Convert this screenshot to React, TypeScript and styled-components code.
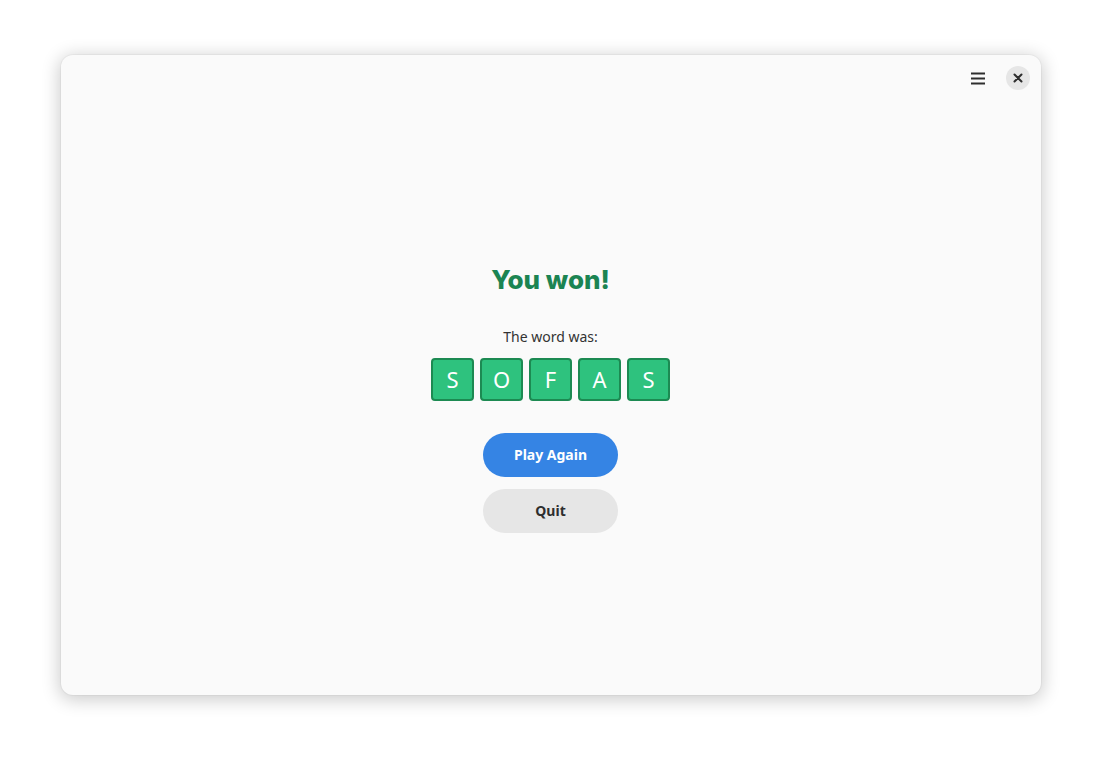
import React from "react";
import styled, { createGlobalStyle } from "styled-components";

const GlobalStyle = createGlobalStyle`
  html, body {
    margin: 0;
    padding: 0;
    background: #ffffff;
  }
  body {
    font-family: "Noto Sans", "Open Sans", sans-serif;
  }
`;

const Page = styled.div`
  width: 1102px;
  height: 762px;
  box-sizing: border-box;
  padding: 55px 61px 67px 61px;
  display: flex;
`;

const Window = styled.div`
  flex: 1;
  display: flex;
  flex-direction: column;
  background: #fafafa;
  border-radius: 12px;
  box-shadow: 0 0 0 1px rgba(0, 0, 0, 0.03), 0 3px 18px 2px rgba(0, 0, 0, 0.2);
  overflow: hidden;
`;

const HeaderBar = styled.div`
  height: 46px;
  display: flex;
  align-items: center;
  justify-content: flex-end;
  gap: 11px;
  padding: 0 11px 0 0;
`;

const FlatButton = styled.button`
  width: 34px;
  height: 34px;
  border: none;
  background: transparent;
  border-radius: 6px;
  display: flex;
  align-items: center;
  justify-content: center;
  padding: 0;
  color: #2e2e2e;
`;

const CloseButton = styled.button`
  width: 24px;
  height: 24px;
  border: none;
  border-radius: 50%;
  background: #e6e6e6;
  display: flex;
  align-items: center;
  justify-content: center;
  padding: 0;
  color: #2e2e2e;
`;

const Main = styled.main`
  flex: 1;
  display: flex;
  flex-direction: column;
  align-items: center;
  justify-content: center;
  padding: 0 1px 3px 0;
`;

const Title = styled.h1`
  margin: 0;
  font-family: "Inter", "Noto Sans", sans-serif;
  font-weight: 800;
  font-size: 26px;
  line-height: 35px;
  padding-top: 1px;
  height: 36px;
  box-sizing: border-box;
  color: #1b8452;
  letter-spacing: 0;
`;

const Subtitle = styled.div`
  margin-top: 30px;
  font-size: 14px;
  line-height: 20px;
  color: #333333;
`;

const Tiles = styled.div`
  margin-top: 11px;
  display: flex;
  gap: 6px;
`;

const Tile = styled.div`
  width: 43px;
  height: 43px;
  box-sizing: border-box;
  border: 2px solid #1c8a52;
  border-radius: 4px;
  background: #2ec27e;
  color: #ffffff;
  font-size: 22px;
  display: flex;
  align-items: center;
  justify-content: center;
`;

const Buttons = styled.div`
  margin-top: 32px;
  display: flex;
  flex-direction: column;
  gap: 12px;
`;

const PillButton = styled.button<{ $primary?: boolean }>`
  width: 135px;
  height: 44px;
  border: none;
  border-radius: 22px;
  font-family: "Noto Sans", sans-serif;
  font-weight: 700;
  font-size: 14px;
  background: ${(p) => (p.$primary ? "#3584e4" : "#e6e6e6")};
  color: ${(p) => (p.$primary ? "#ffffff" : "#2e2e2e")};
`;

const MenuIcon = () => (
  <svg width="16" height="16" viewBox="0 0 16 16">
    <g fill="currentColor">
      <rect x="1" y="2.5" width="14" height="2" />
      <rect x="1" y="7.5" width="14" height="2" />
      <rect x="1" y="12.5" width="14" height="2" />
    </g>
  </svg>
);

const CloseIcon = () => (
  <svg width="10" height="10" viewBox="0 0 10 10">
    <path d="M1.5 1.5 L8.5 8.5 M8.5 1.5 L1.5 8.5" stroke="currentColor" strokeWidth="2" strokeLinecap="round" />
  </svg>
);

export default function App() {
  const word = ["S", "O", "F", "A", "S"];
  return (
    <>
      <GlobalStyle />
      <Page>
        <Window>
          <HeaderBar>
            <FlatButton aria-label="Menu">
              <MenuIcon />
            </FlatButton>
            <CloseButton aria-label="Close">
              <CloseIcon />
            </CloseButton>
          </HeaderBar>
          <Main>
            <Title>You won!</Title>
            <Subtitle>The word was:</Subtitle>
            <Tiles>
              {word.map((l, i) => (
                <Tile key={i}>{l}</Tile>
              ))}
            </Tiles>
            <Buttons>
              <PillButton $primary>Play Again</PillButton>
              <PillButton>Quit</PillButton>
            </Buttons>
          </Main>
        </Window>
      </Page>
    </>
  );
}
